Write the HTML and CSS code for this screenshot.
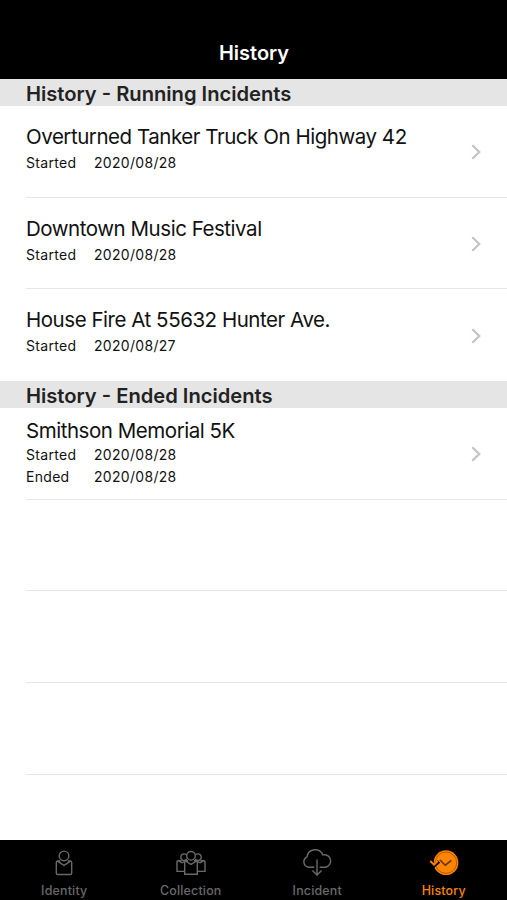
FILE: index.html
```html
<!DOCTYPE html>
<html lang="en">
  <head>
    <title>History</title>
    <meta charset="utf-8">
    <link rel="stylesheet" href="styles.css">
  </head>
  <body>

  <header class="navbar"><h1>History</h1></header>

  <main>
    <h2>History - Running Incidents</h2>
    <ul class="incidents running">
      <li>
        <div class="info">
          <h3>Overturned Tanker Truck On Highway 42</h3>
          <p><span class="label">Started</span><span>2020/08/28</span></p>
        </div>
        <svg class="chevron" viewBox="0 0 10 16"><path d="M1.3 1.2 8.3 8l-7 6.8"/></svg>
      </li>
      <li>
        <div class="info">
          <h3>Downtown Music Festival</h3>
          <p><span class="label">Started</span><span>2020/08/28</span></p>
        </div>
        <svg class="chevron" viewBox="0 0 10 16"><path d="M1.3 1.2 8.3 8l-7 6.8"/></svg>
      </li>
      <li>
        <div class="info">
          <h3>House Fire At 55632 Hunter Ave.</h3>
          <p><span class="label">Started</span><span>2020/08/27</span></p>
        </div>
        <svg class="chevron" viewBox="0 0 10 16"><path d="M1.3 1.2 8.3 8l-7 6.8"/></svg>
      </li>
    </ul>

    <h2>History - Ended Incidents</h2>
    <ul class="incidents ended">
      <li>
        <div class="info">
          <h3>Smithson Memorial 5K</h3>
          <p><span class="label">Started</span><span>2020/08/28</span></p>
          <p><span class="label">Ended</span><span>2020/08/28</span></p>
        </div>
        <svg class="chevron" viewBox="0 0 10 16"><path d="M1.3 1.2 8.3 8l-7 6.8"/></svg>
      </li>
      <li></li>
      <li></li>
      <li></li>
    </ul>
  </main>

  <nav class="tabbar">
    <a class="tab">
      <svg viewBox="0 0 32 28">
        <circle cx="16" cy="6.9" r="4.8"/>
        <path d="M12.3 12H9.9Q8.3 12 8.3 13.6V23.9Q8.3 25.5 9.9 25.5H22.1Q23.7 25.5 23.7 23.9V13.6Q23.7 12 22.1 12H19.7M9.4 12.1 16 16.4 22.6 12.1"/>
      </svg>
      <span>Identity</span>
    </a>
    <a class="tab">
      <svg viewBox="0 0 32 28">
        <circle cx="16" cy="6.8" r="4.3"/>
        <path d="M11.8 10A3.3 3.3 0 1 1 11.6 6.1M20.2 10A3.3 3.3 0 1 0 20.4 6.1"/>
        <path d="M13 11.7H10.7Q9.7 11.7 9.7 12.7V25.2H22.3V12.7Q22.3 11.7 21.3 11.7H19M10.4 12 16 15.4 21.6 12"/>
        <path d="M6.6 11.7H3Q2 11.7 2 12.7V22.4H9.7M25.4 11.7H29Q30 11.7 30 12.7V22.4H22.3M3.6 11.9 7 13.8 9.7 12.4M28.4 11.9 25 13.8 22.3 12.4"/>
      </svg>
      <span>Collection</span>
    </a>
    <a class="tab">
      <svg viewBox="0 0 32 28">
        <path d="M13.4 18.2H7.6A5.5 5.5 0 0 1 6 7.8 8.3 8.3 0 0 1 21.9 5.9 6.3 6.3 0 0 1 24.7 18.2H18.6"/>
        <path d="M16 10.6V26M11.4 21.5 16 26.1 20.6 21.5"/>
      </svg>
      <span>Incident</span>
    </a>
    <a class="tab active">
      <svg viewBox="0 0 32 28">
        <circle class="face" cx="18" cy="13.7" r="12.4"/>
        <circle class="rim" cx="18" cy="13.7" r="10.7"/>
        <path class="hands" d="M12 11 17.3 16.2 23.4 11.4"/>
        <path class="cut" d="M3.3 12.5 6.3 16.6 11 12.4"/>
        <path class="arrow" d="M2.3 12 6 15.7 9.7 12"/>
      </svg>
      <span>History</span>
    </a>
  </nav>

  </body>
</html>
```

FILE: styles.css
```css
* {
  box-sizing: border-box;
}

html {
  height: 100%;
}
body {
  margin: 0;
  height: 100%;
  display: flex;
  flex-direction: column;
  overflow: hidden;
  background: #fff;
  color: #111;
  font-family: Inter, "Liberation Sans", sans-serif;
}

h1, h2, h3, p, ul {
  margin: 0;
  padding: 0;
  font-weight: 400;
}

.navbar {
  flex: none;
  height: 79px;
  padding-top: 40px;
  background: #000;
  color: #fff;
  text-align: center;
}
.navbar h1 {
  font-size: 20px;
  font-weight: 600;
  line-height: 27px;
  padding-left: 1px;
}

main {
  flex: 1;
  min-height: 0;
}

h2 {
  height: 27px;
  padding-left: 26px;
  background: #e5e5e5;
  color: #222;
  font-size: 20.15px;
  font-weight: 600;
  line-height: 30px;
}

.incidents {
  list-style: none;
  padding-left: 26px;
}
.incidents li {
  display: flex;
  justify-content: space-between;
  align-items: center;
  height: 91.7px;
  padding-right: 26px;
  border-bottom: 1px solid #e6e6e6;
}
.running li:last-child {
  border-bottom: 0;
}

.info {
  align-self: flex-start;
  padding-top: 17px;
}
.running p {
  padding-top: 2px;
}
.ended .info {
  padding-top: 9px;
}
h3 {
  font-size: 20.5px;
  line-height: 27px;
  letter-spacing: -0.46px;
  white-space: nowrap;
}
p {
  display: flex;
  font-size: 14px;
  line-height: 22px;
  letter-spacing: 0.3px;
}
.label {
  width: 68px;
}

.chevron {
  width: 10px;
  height: 16px;
  margin-top: 1px;
  fill: none;
  stroke: #c4c4c6;
  stroke-width: 2.2;
}

.tabbar {
  flex: none;
  display: flex;
  height: 60px;
  padding-left: 1px;
  background: #000;
}
.tab {
  flex: 1;
  display: flex;
  flex-direction: column;
  align-items: center;
  padding-top: 9px;
  color: #696969;
  font-size: 12.4px;
  font-weight: 500;
  line-height: 16px;
  letter-spacing: 0.2px;
}
.tab svg {
  width: 32px;
  height: 28px;
  margin-bottom: 6px;
  fill: none;
  stroke: currentColor;
  stroke-width: 1.4;
}
.active {
  color: #ff8500;
}
.tab .face {
  fill: #ff8500;
  stroke: none;
}
.tab .rim {
  stroke: #9c5000;
  stroke-width: 0.8;
}
.tab .hands {
  stroke: #643300;
  stroke-width: 1.5;
}
.tab .cut {
  stroke: #000;
  stroke-width: 3.4;
}
.tab .arrow {
  stroke-width: 1.8;
}
```
